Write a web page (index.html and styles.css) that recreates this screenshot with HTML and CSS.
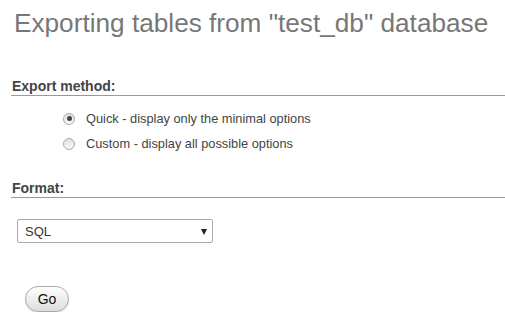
FILE: index.html
```html
<!DOCTYPE html>
<html>
<head>
<meta charset="utf-8">
<title>Export</title>
<link rel="stylesheet" href="styles.css">
</head>
<body>
<div class="page">
  <h2 class="title">Exporting tables from "test_db" database</h2>

  <div class="section section-method">
    <h3 class="section-head">Export method:</h3>
    <ul class="options">
      <li class="option"><input type="radio" name="m" class="radio" id="q" checked><label for="q">Quick - display only the minimal options</label></li>
      <li class="option"><input type="radio" name="m" class="radio" id="c"><label for="c">Custom - display all possible options</label></li>
    </ul>
  </div>

  <div class="section section-format">
    <h3 class="section-head">Format:</h3>
    <div class="select-wrap">
      <select class="select">
        <option>SQL</option>
      </select>
      <span class="select-arrow"></span>
    </div>
  </div>

  <button class="go" type="button">Go</button>
</div>
</body>
</html>
```

FILE: styles.css
```css
html, body {
  margin: 0;
  padding: 0;
  background: #fff;
}

body {
  font-family: "Liberation Sans", Arial, sans-serif;
  color: #444;
}

.page {
  padding: 8px 0 0 11px;
}

.title {
  margin: 0 0 0 3px;
  font-size: 26.2px;
  line-height: 30px;
  font-weight: normal;
  color: #777;
}

.section-method {
  margin-top: 40px;
}

.section-head {
  margin: 0;
  font-size: 14px;
  line-height: 16px;
  font-weight: bold;
  color: #444;
  padding: 0 0 1px 1px;
  border-bottom: 1px solid #999;
}

.options {
  list-style: none;
  margin: 0;
  padding: 10px 0 0 52px;
}

.option {
  display: flex;
  align-items: center;
  height: 25px;
  gap: 11px;
  font-size: 12.8px;
  color: #444;
}

.radio {
  appearance: none;
  -webkit-appearance: none;
  margin: 0;
  width: 12px;
  height: 12px;
  border-radius: 50%;
  border: 1px solid #a8a8a8;
  background: linear-gradient(#e2e2e2, #f8f8f8);
  box-sizing: border-box;
  position: relative;
  flex: none;
}

.radio:checked::after {
  content: "";
  position: absolute;
  left: 2.5px;
  top: 2.5px;
  width: 5px;
  height: 5px;
  border-radius: 50%;
  background: #444;
}

.section-format {
  margin-top: 24px;
}

.select-wrap {
  position: relative;
  margin: 21px 0 0 6px;
  width: 196px;
  height: 24px;
}

.select {
  appearance: none;
  -webkit-appearance: none;
  width: 196px;
  height: 24px;
  box-sizing: border-box;
  border: 1px solid #aaa;
  border-radius: 2px;
  background: #fff;
  padding: 0 0 0 7px;
  font-family: "Liberation Sans", Arial, sans-serif;
  font-size: 13px;
  color: #333;
  outline: none;
}

.select-arrow {
  position: absolute;
  left: 184px;
  top: 10px;
  width: 0;
  height: 0;
  border-left: 3.5px solid transparent;
  border-right: 3.5px solid transparent;
  border-top: 6px solid #222;
  pointer-events: none;
}

.go {
  display: block;
  margin: 43px 0 0 14px;
  width: 44px;
  height: 26px;
  box-sizing: border-box;
  border: 1px solid #aaa;
  border-radius: 13px;
  background: linear-gradient(#ffffff, #dcdcdc);
  font-family: "Liberation Sans", Arial, sans-serif;
  font-size: 14px;
  color: #111;
  padding: 0;
  box-shadow: 0 1px 1px rgba(0,0,0,0.12);
}
```
